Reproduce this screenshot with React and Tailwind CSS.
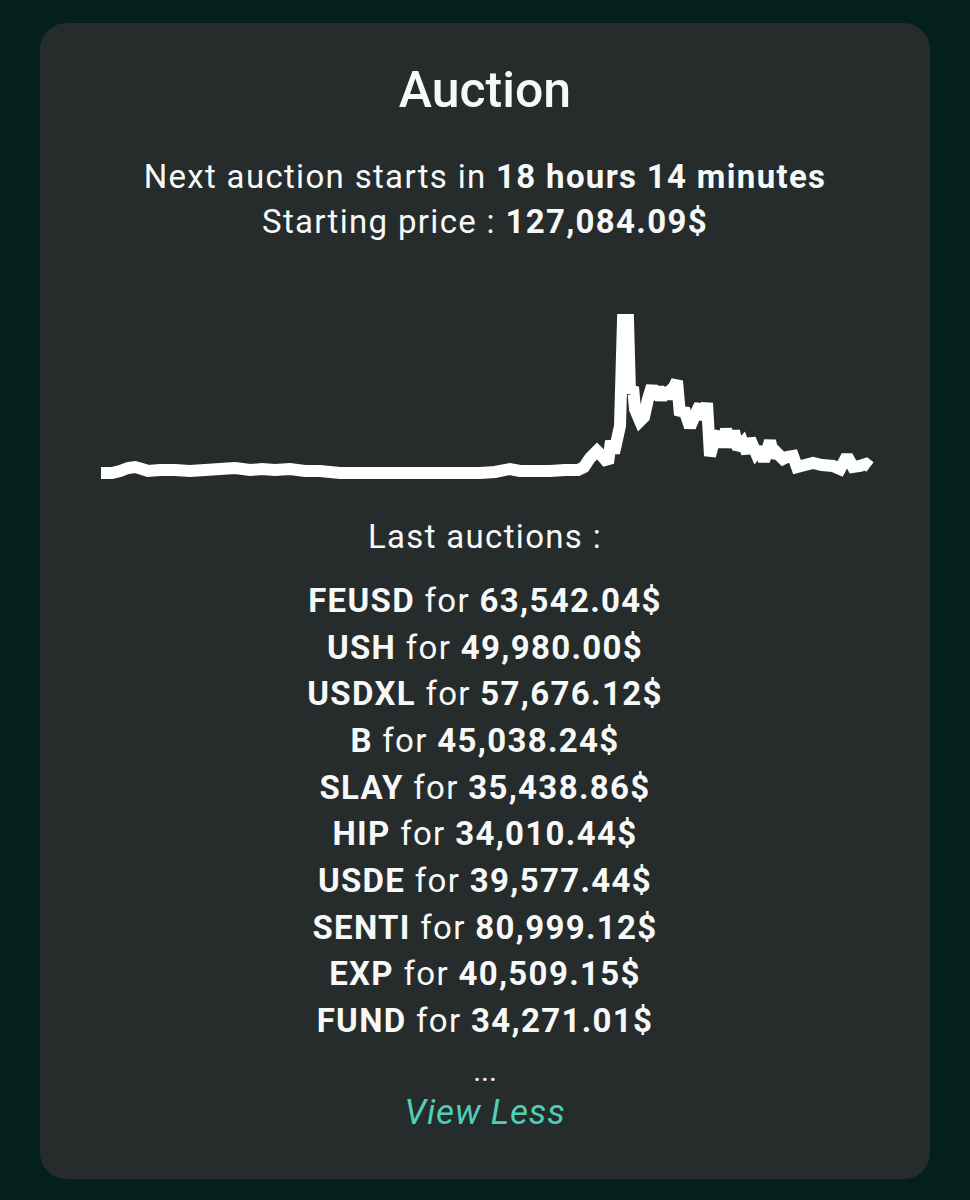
const points = [
  [101, 472], [112, 472], [120, 470], [128, 467], [135, 466], [142, 468], [148, 470], [160, 469], [175, 469], [190, 470], [205, 469], [220, 468], [235, 467], [250, 469], [262, 468], [275, 469], [290, 468], [305, 470], [320, 470], [340, 472], [380, 472], [420, 472], [460, 472], [480, 472], [495, 471], [510, 468], [520, 470], [535, 470], [550, 470], [565, 469], [578, 469], [584, 466], [590, 457], [597, 450], [603, 456], [608, 462], [611, 440], [614, 452], [620, 425], [623, 319], [628, 319], [630, 392], [633, 386], [635, 408], [640, 420], [644, 416], [648, 398], [652, 385], [655, 398], [658, 386], [661, 399], [664, 387], [667, 397], [670, 390], [674, 386], [677, 380], [680, 414], [684, 408], [690, 426], [695, 414], [700, 404], [704, 418], [707, 402], [710, 455], [714, 440], [720, 432], [723, 446], [726, 428], [730, 446], [734, 430], [738, 448], [743, 442], [747, 452], [750, 438], [756, 452], [760, 447], [764, 460], [770, 440], [774, 456], [777, 452], [783, 458], [787, 456], [793, 455], [797, 466], [805, 464], [813, 462], [822, 464], [833, 465], [840, 468], [847, 455], [853, 466], [860, 465], [866, 463], [870, 466],
];

const auctions = [
  ["FEUSD", "63,542.04$"],
  ["USH", "49,980.00$"],
  ["USDXL", "57,676.12$"],
  ["B", "45,038.24$"],
  ["SLAY", "35,438.86$"],
  ["HIP", "34,010.44$"],
  ["USDE", "39,577.44$"],
  ["SENTI", "80,999.12$"],
  ["EXP", "40,509.15$"],
  ["FUND", "34,271.01$"],
];

export default function App() {
  return (
    <div
      className="min-h-[1200px] w-full bg-[#03201c] px-10 pt-[23px] pb-[22px] text-[#f7f8f8]"
      style={{ fontFamily: 'Roboto, "Noto Sans", sans-serif' }}
    >
      <div className="flex flex-col items-center rounded-[26px] bg-[#262b2b] pt-[39px] pb-[44px] text-center">
        <h1 className="text-[50px] leading-[56px] font-medium">Auction</h1>
        <div className="mt-[36px] text-[33px] leading-[45px] tracking-[0.04em]">
          <div>
            Next auction starts in <span className="font-bold">18 hours 14 minutes</span>
          </div>
          <div>
            Starting price : <span className="font-bold">127,084.09$</span>
          </div>
        </div>
        <svg
          className="mt-[62px] block"
          width="790"
          height="180"
          viewBox="90 305 790 180"
        >
          <polyline
            points={points.map((p) => p.join(",")).join(" ")}
            fill="none"
            stroke="#ffffff"
            strokeWidth="12"
            strokeLinejoin="miter"
            strokeMiterlimit="2"
          />
        </svg>
        <div className="mt-[28px] text-[33px] leading-[45px] tracking-[0.04em]">Last auctions :</div>
        <div className="mt-[19px] text-[33px] leading-[46.67px] tracking-[0.04em]">
          {auctions.map(([name, price]) => (
            <div key={name}>
              <span className="font-bold">{name}</span> for{" "}
              <span className="font-bold">{price}</span>
            </div>
          ))}
        </div>
        <div className="mt-[6px] text-[30px] leading-[40px]">...</div>
        <div className="text-[35px] leading-[44px] italic tracking-[0.025em] text-[#4fcfb7]">View Less</div>
      </div>
    </div>
  );
}
